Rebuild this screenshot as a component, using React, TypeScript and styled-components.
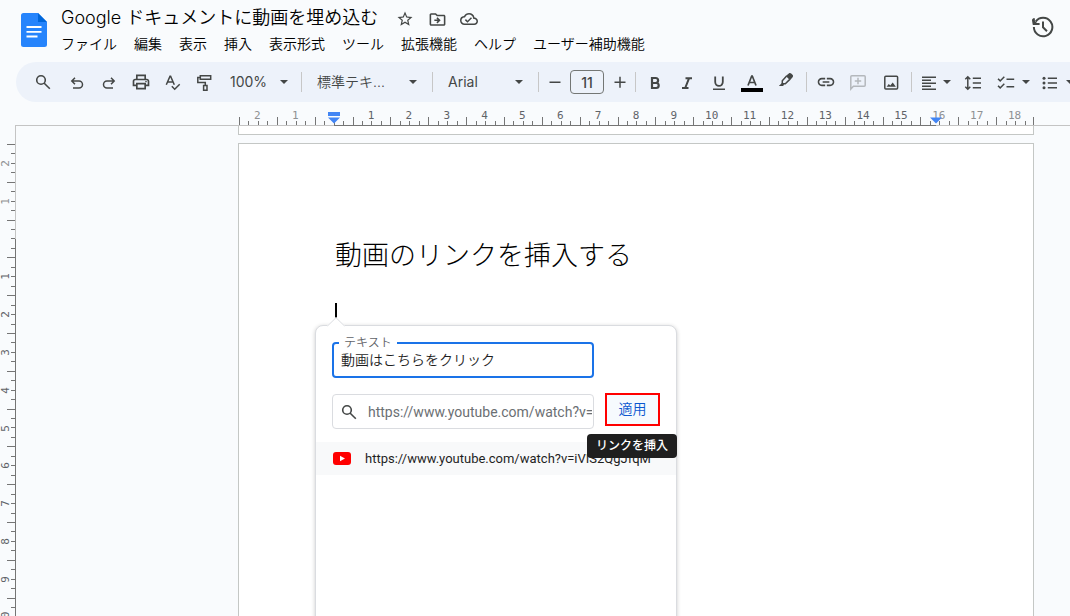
import React from "react";
import styled, { createGlobalStyle, css } from "styled-components";
import {
  MdStarBorder,
  MdOutlineDriveFileMove,
  MdOutlineCloudDone,
  MdOutlinePrint,
  MdLink,
} from "react-icons/md";

const jp = `"Noto Sans CJK JP", sans-serif`;
const videoUrl = "https://www.youtube.com/watch?v=iVIS2QgJfqM";

const GlobalStyle = createGlobalStyle`
  *, *::before, *::after { box-sizing: border-box; }
  html, body, #root { height: 100%; }
  body {
    margin: 0;
    background: #f9fbfd;
    color: #1f1f1f;
    font-family: Roboto, ${jp};
    overflow: hidden;
  }
  button, input { font: inherit; color: inherit; }
  button { border: 0; padding: 0; background: none; cursor: pointer; }
  h1, h2 { margin: 0; }
  svg { display: block; }
`;

/* ---------- header ---------- */

const Shell = styled.div`
  display: flex;
  flex-direction: column;
  height: 100%;
`;
const Header = styled.header`
  display: flex;
  flex: none;
  height: 62px;
  padding: 5px 16px 0 21px;
`;
const Logo = styled.a`
  width: 26px;
  padding-top: 8px;
`;
const HeaderMain = styled.div`
  flex: 1;
  padding-left: 14px;
`;
const TitleRow = styled.div`
  display: flex;
  align-items: center;
  height: 26px;
  gap: 8px;
`;
const Title = styled.h1`
  margin-right: 7px;
  font: 350 18px/26px Inter, ${jp};
  color: #000;
  white-space: nowrap;
`;
const TitleButton = styled.button`
  display: grid;
  place-items: center;
  width: 24px;
  height: 24px;
  padding-top: 2px;
  color: #444746;
`;
const MenuBar = styled.nav`
  display: flex;
  gap: 17px;
`;
const MenuButton = styled.button`
  font-size: 14px;
  line-height: 26px;
  font-weight: 350;
  color: #000;
  white-space: nowrap;
`;
const HistoryButton = styled.button`
  align-self: flex-start;
  margin-top: 11px;
  color: #444746;
`;

/* ---------- toolbar ---------- */

const Toolbar = styled.div`
  display: flex;
  flex: none;
  align-items: center;
  height: 40px;
  margin-left: 16px;
  padding-left: 9px;
  border-radius: 20px 0 0 20px;
  background: #edf2fa;
  color: #444746;
  overflow: hidden;
`;
const ToolGroup = styled.div`
  display: flex;
  flex: none;
  padding: 0 3px;
`;
const Tool = styled.button<{ $w?: number; $gap?: number; $muted?: boolean }>`
  display: flex;
  flex: none;
  align-items: center;
  justify-content: center;
  gap: ${(p) => p.$gap ?? 0}px;
  width: ${(p) => p.$w ?? 32}px;
  height: 30px;
  ${(p) => p.$muted && css`color: #b4b8bc;`}
`;
const Picker = styled.button<{ $w: number; $pad?: string }>`
  display: flex;
  flex: none;
  align-items: center;
  justify-content: space-between;
  width: ${(p) => p.$w}px;
  height: 30px;
  padding: ${(p) => p.$pad ?? "0 15px"};
  font: 400 14px/20px Inter, ${jp};
`;
const PickerText = styled.span<{ $light?: boolean }>`
  font-weight: ${(p) => (p.$light ? 350 : 400)};
`;
const Caret = styled.span`
  border: 4px solid transparent;
  border-top-color: currentColor;
  border-bottom: 0;
`;
const Divider = styled.span`
  flex: none;
  width: 1px;
  height: 20px;
  background: #c7c7c7;
`;
const SizeInput = styled.input`
  flex: none;
  width: 34px;
  height: 24px;
  padding: 0;
  border: 1px solid #747775;
  border-radius: 4px;
  background: none;
  text-align: center;
  font: 500 14px/20px Inter, sans-serif;
`;

/* ---------- rulers ---------- */

const rulerFont = css`
  font-family: "DejaVu Sans Mono", monospace;
  font-size: 11px;
  line-height: 12px;
`;
const RulerRow = styled.div`
  display: grid;
  grid-template-columns: 239px minmax(0, 795px);
  flex: none;
  height: 23px;
`;
const HRuler = styled.div`
  grid-column: 2;
  position: relative;
  z-index: 1;
  display: grid;
  grid-template-columns: repeat(21, 1fr);
`;
const HCell = styled.div`
  position: relative;
  display: grid;
  grid-template-columns: repeat(4, 1fr);
  align-items: end;
  &:last-of-type::after {
    content: "";
    position: absolute;
    right: 0;
    bottom: 0;
    height: 8px;
    border-right: 1px solid #757575;
  }
`;
const HTick = styled.i<{ $long?: boolean }>`
  height: ${(p) => (p.$long ? 8 : 4)}px;
  border-left: 1px solid #757575;
`;
const HLabel = styled.span<{ $dim: boolean }>`
  position: absolute;
  inset: 8px 1px auto 0;
  text-align: center;
  color: ${(p) => (p.$dim ? "#8f9193" : "#5f6368")};
  ${rulerFont}
`;
const ActiveRange = styled.span`
  position: absolute;
  bottom: -1px;
  left: 12%;
  right: 12.3%;
  height: 1px;
  background: #757575;
`;
const Marker = styled.svg<{ $at: number }>`
  position: absolute;
  bottom: 1px;
  left: ${(p) => p.$at}%;
  margin-left: -6px;
`;
const Work = styled.main`
  display: flex;
  flex: 1;
  min-height: 0;
  overflow: hidden;
`;
const VRuler = styled.div`
  position: relative;
  z-index: 1;
  flex: none;
  width: 15px;
  padding-top: 19px;
`;
const VScale = styled.div`
  position: relative;
  display: grid;
  grid-template-rows: repeat(25, 1fr);
  height: 945px;
  &::after {
    content: "";
    position: absolute;
    inset: 95px -1px 0 auto;
    width: 1px;
    background: #757575;
  }
`;
const VCell = styled.div`
  position: relative;
  display: grid;
  grid-template-rows: repeat(4, 1fr);
  justify-items: end;
`;
const VTick = styled.i<{ $long?: boolean }>`
  width: ${(p) => (p.$long ? 8 : 4)}px;
  border-top: 1px solid #757575;
`;
const VLabel = styled.span<{ $dim: boolean }>`
  position: absolute;
  inset: 1px auto -1px 0;
  writing-mode: vertical-rl;
  transform: rotate(180deg);
  text-align: center;
  color: ${(p) => (p.$dim ? "#8f9193" : "#5f6368")};
  ${rulerFont}
`;

/* ---------- document ---------- */

const Canvas = styled.div`
  flex: 1;
  display: grid;
  grid-template-columns: 222px minmax(0, 796px);
  grid-template-rows: 9px 8px minmax(0, 1fr);
  border: solid #c4c4c4;
  border-width: 1px 0 0 1px;
`;
const PreviousPage = styled.div`
  grid-column: 2;
  border: 1px solid #c4c7c5;
  border-top: 0;
  background: #fff;
`;
const Page = styled.article`
  grid-column: 2;
  grid-row: 3;
  padding: 90px 96px 0;
  border: 1px solid #c4c7c5;
  border-bottom: 0;
  background: #fff;
`;
const Heading = styled.h2`
  font: 300 27px/40px ${jp};
  color: #000;
`;
const TextCursor = styled.div`
  position: relative;
  width: 2px;
  height: 15px;
  margin-top: 29px;
  background: #000;
`;

/* ---------- link popup ---------- */

const Popup = styled.form`
  position: absolute;
  top: 22px;
  left: -20px;
  width: 362px;
  height: 480px;
  padding-top: 10px;
  border: 1px solid #dadce0;
  border-radius: 8px;
  background: #fff;
  box-shadow: 0 1px 4px rgba(0, 0, 0, 0.2);
  font-size: 14px;
`;
const Arrow = styled.svg`
  position: absolute;
  top: -9px;
  left: 11px;
`;
const TextField = styled.fieldset`
  width: 262px;
  height: 42px;
  margin: 0 16px;
  padding: 0 5px;
  border: 2px solid #1a73e8;
  border-radius: 4px;
`;
const FieldLegend = styled.legend`
  padding: 0 5px;
  font-size: 12px;
  line-height: 14px;
  font-weight: 350;
  color: #5f6368;
`;
const TextInput = styled.input`
  display: block;
  width: 100%;
  height: 20px;
  padding: 0 2px;
  border: 0;
  outline: 0;
  background: none;
  font-weight: 350;
  line-height: 20px;
`;
const LinkRow = styled.div`
  display: flex;
  align-items: flex-start;
  gap: 11px;
  margin: 15px 16px 0;
`;
const SearchField = styled.label`
  display: flex;
  align-items: center;
  width: 262px;
  height: 35px;
  margin-top: 1px;
  padding-left: 6px;
  border: 1px solid #dadce0;
  border-radius: 4px;
  color: #444746;
`;
const UrlInput = styled.input`
  flex: 1;
  min-width: 0;
  height: 24px;
  margin: 0 1px 0 9px;
  padding: 0;
  border: 0;
  outline: 0;
  background: none;
  color: #6b6f73;
`;
const ApplyWrap = styled.div`
  position: relative;
`;
const ApplyButton = styled.button`
  display: block;
  width: 55px;
  height: 33px;
  padding-bottom: 2px;
  border: 2px solid #f00;
  background: #f6fafe;
  color: #0b57d0;
  line-height: 20px;
  font-weight: 350;
`;
const Tooltip = styled.span`
  position: absolute;
  z-index: 1;
  top: 41px;
  left: -18px;
  padding: 0 9px;
  border-radius: 4px;
  background: #1f1f1f;
  color: #fff;
  font-size: 12px;
  line-height: 24px;
  font-weight: 500;
  white-space: nowrap;
`;
const Suggestion = styled.a`
  display: flex;
  align-items: center;
  gap: 14px;
  height: 33px;
  margin-top: 13px;
  padding-left: 17px;
  background: #f8f9fa;
  color: #1f1f1f;
  font-size: 13px;
  text-decoration: none;
  white-space: nowrap;
`;

/* ---------- icons ---------- */

function Icon({ size = 20, width = 1.5, children }: { size?: number; width?: number; children: React.ReactNode }) {
  return (
    <svg width={size} height={size} viewBox="0 0 20 20" fill="none" stroke="currentColor" strokeWidth={width}>
      {children}
    </svg>
  );
}

const SearchIcon = () => (
  <Icon width={1.6}><circle cx="8" cy="8" r="4.3" /><path d="M11 11l5.8 5.8" /></Icon>
);
const UndoIcon = () => (
  <Icon><path d="M8 5.8L4.8 9 8 12.2M5 9h7a3.4 3.4 0 0 1 0 7H6" /></Icon>
);
const RedoIcon = () => (
  <Icon><path d="M12 5.8L15.2 9 12 12.2M15 9H8a3.4 3.4 0 0 0 0 7h6" /></Icon>
);
const SpellIcon = () => (
  <Icon><path d="M3.3 12.8L7 4.2h.6l3.7 8.6M4.6 10h5.4M8.8 14.3l2.9 2.9 5-5" /></Icon>
);
const PaintIcon = () => (
  <Icon><path d="M5.3 3.8h10.4v3.5H5.3zM5.3 5.5H2.8v5h7.5v3M8.6 13.5H12v4.8H8.6z" /></Icon>
);
const BoldIcon = () => (
  <Icon width={2.2}><path d="M7 6h3.6a2.5 2.5 0 0 1 0 5H7zM7 11h4.2a2.5 2.5 0 0 1 0 5H7z" /></Icon>
);
const ItalicIcon = () => (
  <Icon width={2}><path d="M8.5 6.3H15M5 16h6.5M12 6.3L8.2 16" /></Icon>
);
const UnderlineIcon = () => (
  <Icon width={1.8}><path d="M6.2 4.5v5.6a3.8 3.8 0 0 0 7.6 0V4.5" /><path strokeWidth="1.5" d="M4 17.2h12" /></Icon>
);
const TextColorIcon = () => (
  <svg width="22" height="20" viewBox="0 0 22 20" fill="none" stroke="currentColor" strokeWidth="1.7">
    <path d="M7 13.5L10.7 4h.6L15 13.5M8.3 10.5h5.4" />
    <path d="M0 16h22v4H0z" fill="#000" stroke="none" />
  </svg>
);
const HighlightIcon = () => (
  <Icon>
    <path d="M10.6 4L6.3 8.7v3.1h3L13.8 7.4" />
    <path fill="currentColor" stroke="none" d="M9.8 4l3-2.6c.9-.7 1.7-.6 2.4.1l1.3 1.3c.7.8.8 1.6.1 2.4L14 8.3zM6.2 10.8l2 2L7 14H2.8z" />
  </Icon>
);
const CommentIcon = () => (
  <Icon><path d="M2.8 17V4.8q0-1 1-1h12.4q1 0 1 1v8.4q0 1-1 1H5.4zM10 5.8v6.4M6.8 9h6.4" /></Icon>
);
const ImageIcon = () => (
  <Icon>
    <rect x="3.8" y="4.3" width="12.8" height="12.8" rx="1" />
    <path fill="currentColor" stroke="none" d="M5.6 14.8l2.2-2.9 1.5 1.7 2.4-3 3.2 4.2z" />
  </Icon>
);
const AlignIcon = () => (
  <Icon><path d="M3 5.3h14M3 8.3h9M3 11.3h14M3 14.3h9M3 17.3h14" /></Icon>
);
const SpacingIcon = () => (
  <Icon><path d="M4.8 5v12M2.3 7.3l2.5-2.5 2.5 2.5M2.3 14.7l2.5 2.5 2.5-2.5M9.8 6.3H18M9.8 11H18M9.8 15.7H18" /></Icon>
);
const ChecklistIcon = () => (
  <Icon><path d="M2 6.7l2.2 2.2L8.3 4.7M2 13.7l2.2 2.2 4.1-4.2M10.5 7.3h7.7M10.5 14.7h7.7" /></Icon>
);
const BulletsIcon = () => (
  <Icon>
    <path d="M7.8 6.3H17M7.8 11H17M7.8 15.7H17" />
    <g fill="currentColor" stroke="none"><circle cx="4" cy="6.3" r="1.5" /><circle cx="4" cy="11" r="1.5" /><circle cx="4" cy="15.7" r="1.5" /></g>
  </Icon>
);
const HistoryIcon = () => (
  <Icon size={22} width={1.8}>
    <path d="M1.7 10a8.4 8.4 0 1 0 1.6-4.9M1.7 2v5.2h5.2" />
    <path d="M1 4.5l3 2.5H1.5z" fill="currentColor" />
    <path d="M10 5v5.3l3.6 3.5" />
  </Icon>
);

const menus = ["ファイル", "編集", "表示", "挿入", "表示形式", "ツール", "拡張機能", "ヘルプ", "ユーザー補助機能"];

const hLabels = [-2, -1, 0, ...Array.from({ length: 18 }, (_, i) => i + 1)];
const vLabels = [-2, -1, 0, ...Array.from({ length: 22 }, (_, i) => i + 1)];

export default function App() {
  return (
    <>
      <GlobalStyle />
      <Shell>
        <Header>
          <Logo href="#" aria-label="ドキュメント ホーム">
            <svg width="26" height="34" viewBox="0 0 26 34">
              <path d="M2.5 0H17l9 9v22.5a2.5 2.5 0 0 1-2.5 2.5h-21A2.5 2.5 0 0 1 0 31.5v-29A2.5 2.5 0 0 1 2.5 0z" fill="#2684fc" />
              <path d="M17 0l9 9h-9z" fill="#0066da" />
              <path d="M5.5 14H20.5M5.5 18.8H20.5M5.5 23.5H16.5" stroke="#fff" strokeWidth="1.8" />
            </svg>
          </Logo>
          <HeaderMain>
            <TitleRow>
              <Title>Google ドキュメントに動画を埋め込む</Title>
              <TitleButton aria-label="スター"><MdStarBorder size={18} /></TitleButton>
              <TitleButton aria-label="移動"><MdOutlineDriveFileMove size={19} /></TitleButton>
              <TitleButton aria-label="保存状態"><MdOutlineCloudDone size={18} /></TitleButton>
            </TitleRow>
            <MenuBar>
              {menus.map((m) => <MenuButton key={m}>{m}</MenuButton>)}
            </MenuBar>
          </HeaderMain>
          <HistoryButton aria-label="変更履歴"><HistoryIcon /></HistoryButton>
        </Header>

        <Toolbar>
          <Tool $w={36} aria-label="検索"><SearchIcon /></Tool>
          <Tool aria-label="元に戻す"><UndoIcon /></Tool>
          <Tool aria-label="やり直し"><RedoIcon /></Tool>
          <Tool aria-label="印刷"><MdOutlinePrint size={20} /></Tool>
          <Tool aria-label="スペルチェック"><SpellIcon /></Tool>
          <Tool aria-label="書式を貼り付け"><PaintIcon /></Tool>
          <Picker $w={80} $pad="0 13px 0 9px"><PickerText>100%</PickerText><Caret /></Picker>
          <Divider />
          <Picker $w={130}><PickerText $light>標準テキ...</PickerText><Caret /></Picker>
          <Divider />
          <Picker $w={105}><PickerText>Arial</PickerText><Caret /></Picker>
          <Divider />
          <Tool $w={31} aria-label="縮小"><Icon><path d="M4.5 10.3h11" /></Icon></Tool>
          <SizeInput aria-label="フォントサイズ" defaultValue="11" />
          <Tool $w={31} aria-label="拡大"><Icon><path d="M4.5 10.3h11M10 4.8v11" /></Icon></Tool>
          <Divider />
          <ToolGroup>
            <Tool aria-label="太字"><BoldIcon /></Tool>
            <Tool aria-label="斜体"><ItalicIcon /></Tool>
            <Tool aria-label="下線"><UnderlineIcon /></Tool>
            <Tool $w={34} aria-label="文字の色"><TextColorIcon /></Tool>
            <Tool $w={34} aria-label="ハイライト"><HighlightIcon /></Tool>
          </ToolGroup>
          <Divider />
          <ToolGroup>
            <Tool aria-label="リンク"><MdLink size={20} /></Tool>
            <Tool $muted aria-label="コメント"><CommentIcon /></Tool>
            <Tool $w={34} aria-label="画像"><ImageIcon /></Tool>
          </ToolGroup>
          <Divider />
          <ToolGroup>
            <Tool $w={40} $gap={4} aria-label="配置"><AlignIcon /><Caret /></Tool>
            <Tool $w={36} aria-label="行間隔"><SpacingIcon /></Tool>
            <Tool $w={44} $gap={6} aria-label="チェックリスト"><ChecklistIcon /><Caret /></Tool>
            <Tool $w={44} $gap={6} aria-label="箇条書き"><BulletsIcon /><Caret /></Tool>
          </ToolGroup>
        </Toolbar>

        <RulerRow>
          <HRuler>
            {hLabels.map((n) => (
              <HCell key={n}>
                <HTick $long /><HTick /><HTick /><HTick />
                {n !== 0 && <HLabel $dim={n < 0 || n > 15}>{Math.abs(n)}</HLabel>}
              </HCell>
            ))}
            <ActiveRange />
            <Marker $at={12} width="12" height="12" viewBox="0 0 12 12" fill="#4285f4">
              <path d="M0 0h12v4H0zM0 5.5h12l-6 6z" />
            </Marker>
            <Marker $at={87.7} width="12" height="12" viewBox="0 0 12 12" fill="#4285f4">
              <path d="M0 5.5h12l-6 6z" />
            </Marker>
          </HRuler>
        </RulerRow>

        <Work>
          <VRuler>
            <VScale>
              {vLabels.map((n) => (
                <VCell key={n}>
                  <VTick $long /><VTick /><VTick /><VTick />
                  {n !== 0 && <VLabel $dim={n < 0}>{Math.abs(n)}</VLabel>}
                </VCell>
              ))}
            </VScale>
          </VRuler>
          <Canvas>
            <PreviousPage />
            <Page>
              <Heading>動画のリンクを挿入する</Heading>
              <TextCursor>
                <Popup onSubmit={(e) => e.preventDefault()}>
                  <Arrow width="18" height="10" viewBox="0 0 18 10">
                    <path d="M0 9l9-9 9 9v1H0z" fill="#fff" />
                    <path d="M0.5 9L9 0.7 17.5 9" fill="none" stroke="#dadce0" />
                  </Arrow>
                  <TextField>
                    <FieldLegend><label htmlFor="link-text">テキスト</label></FieldLegend>
                    <TextInput id="link-text" defaultValue="動画はこちらをクリック" />
                  </TextField>
                  <LinkRow>
                    <SearchField>
                      <SearchIcon />
                      <UrlInput aria-label="リンクを検索または貼り付け" defaultValue={videoUrl} />
                    </SearchField>
                    <ApplyWrap>
                      <ApplyButton type="submit">適用</ApplyButton>
                      <Tooltip role="tooltip">リンクを挿入</Tooltip>
                    </ApplyWrap>
                  </LinkRow>
                  <Suggestion href="#">
                    <svg width="18" height="13" viewBox="0 0 18 13">
                      <rect width="18" height="13" rx="3" fill="#f00" />
                      <path d="M7 3.7l5 2.8-5 2.8z" fill="#fff" />
                    </svg>
                    {videoUrl}
                  </Suggestion>
                </Popup>
              </TextCursor>
            </Page>
          </Canvas>
        </Work>
      </Shell>
    </>
  );
}
